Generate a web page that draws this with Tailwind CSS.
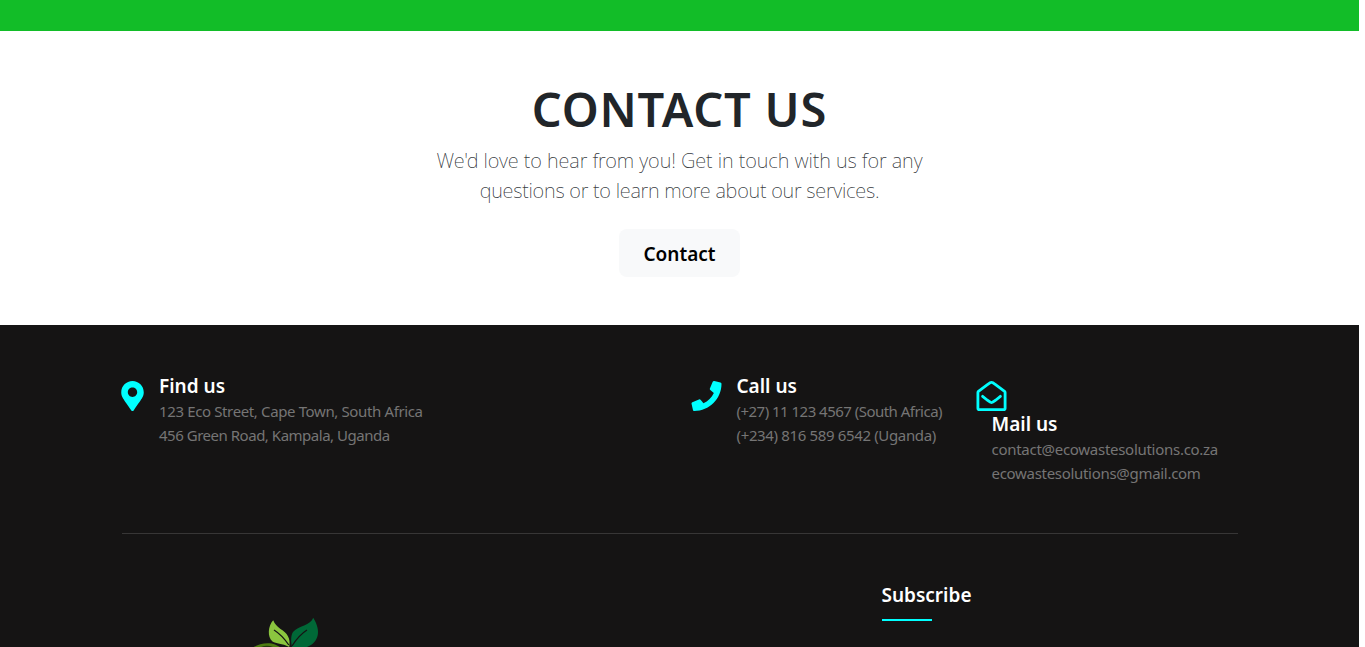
<!DOCTYPE html>
<html lang="en">
<head>
    <meta charset="UTF-8">
    <meta name="viewport" content="width=device-width, initial-scale=1.0">
    <title>Eco Waste Solutions</title>
    <script src="https://cdn.jsdelivr.net/npm/@tailwindcss/browser@4"></script>
</head>
<body class="bg-white h-screen overflow-hidden font-['Noto_Sans',sans-serif]">
    <div class="w-[1359px]">
        <div class="h-[31px] bg-[#12bd28]"></div>

        <section class="h-[294px] pt-[49px] flex flex-col items-center text-[#212529]">
            <h1 class="text-[47px] leading-[58px] font-[650] tracking-[0.8px] whitespace-nowrap">CONTACT US</h1>
            <p class="mt-[8px] text-xl leading-[30px] font-extralight text-center whitespace-nowrap text-[#212529]/90"><span class="tracking-[-0.07px]">We'd love to hear from you! Get in touch with us for any</span><br><span class="tracking-[-0.25px]">questions or to learn more about our services.</span></p>
            <a href="#" class="mt-[23px] w-[121px] h-12 pt-0.5 rounded-lg bg-[#f8f9fa] text-black text-[19px] font-semibold flex items-center justify-center">Contact</a>
        </section>

        <footer class="h-[322px] bg-[#151414]">
            <div class="w-[1116px] mx-auto">
                <div class="h-[209px] pt-12 grid grid-cols-[570px_285px_1fr] border-b border-[#373636]">
                    <div class="flex">
                        <svg class="-ml-[0.5px] mt-2 w-[23px] h-[30px] fill-[#00ffff]" viewBox="-4.25 0 392.5 512"><path d="M172.268 501.67C26.97 291.031 0 269.413 0 192 0 85.961 85.961 0 192 0s192 85.961 192 192c0 77.413-26.97 99.031-172.268 309.67-9.535 13.774-29.93 13.773-39.464 0zM192 272c44.183 0 80-35.817 80-80s-35.817-80-80-80-80 35.817-80 80 35.817 80 80 80z"/></svg>
                        <div class="pl-[15px] whitespace-nowrap">
                            <h4 class="pt-px text-[19px] leading-6 font-semibold text-white">Find us</h4>
                            <p class="mt-px text-[15px] leading-6 tracking-[-0.37px] text-[#757575]">123 Eco Street, Cape Town, South Africa</p>
                            <p class="text-[15px] leading-6 tracking-[-0.48px] text-[#757575]">456 Green Road, Kampala, Uganda</p>
                        </div>
                    </div>
                    <div class="flex">
                        <svg class="-ml-[0.5px] -mr-[0.5px] mt-2 w-[31px] h-[30px] fill-[#00ffff]" viewBox="-8.5 0 529 512"><path d="M493.4 24.6l-104-24c-11.3-2.6-22.9 3.3-27.5 13.9l-48 112c-4.2 9.8-1.4 21.3 6.9 28l60.6 49.6c-36 76.7-98.9 140.5-177.2 177.2l-49.6-60.6c-6.8-8.3-18.2-11.1-28-6.9l-112 48C3.9 366.5-2 378.1.6 389.4l24 104C27.1 504.2 36.7 512 48 512c256.1 0 464-207.5 464-464 0-11.2-7.7-20.9-18.6-23.4z"/></svg>
                        <div class="pl-[15px] whitespace-nowrap">
                            <h4 class="pt-px text-[19px] leading-6 font-semibold text-white">Call us</h4>
                            <p class="mt-px text-[15px] leading-6 tracking-[-0.52px] text-[#757575]">(+27) 11 123 4567 (South Africa)</p>
                            <p class="text-[15px] leading-6 tracking-[-0.35px] text-[#757575]">(+234) 816 589 6542 (Uganda)</p>
                        </div>
                    </div>
                    <div>
                        <svg class="-ml-[0.5px] mt-2 w-[31px] h-[30px]" viewBox="-8.5 0 529 512" fill="none" stroke="#00ffff" stroke-width="48" stroke-linejoin="round" stroke-linecap="round"><path d="M24 197c0-8 3-14 9-19 22-17 40-32 148-112 17-12 50-43 75-42 25-1 58 30 75 42 108 80 126 95 148 112 6 5 9 11 9 19v267c0 13-11 24-24 24H48c-13 0-24-11-24-24z"/><path d="M104 262l77 62c17 13 50 44 75 44s58-31 75-44l77-62"/></svg>
                        <div class="pl-[15px] whitespace-nowrap">
                            <h4 class="pt-px text-[19px] leading-6 font-semibold text-white">Mail us</h4>
                            <p class="mt-px text-[15px] leading-6 tracking-[-0.28px] text-[#757575]">contact@ecowastesolutions.co.za</p>
                            <p class="text-[15px] leading-6 tracking-[-0.3px] text-[#757575]">ecowastesolutions@gmail.com</p>
                        </div>
                    </div>
                </div>

                <div class="grid grid-cols-[760px_1fr]">
                    <div class="pl-[130px] pt-[83px]">
                        <svg class="w-[72px] h-[30px]" viewBox="0 0 72 30">
                            <path d="M2 30C7 26.5 17 25 23 27.5L28 30Z" fill="#4f7d12"/>
                            <path d="M9 30Q15 27.5 21 30Z" fill="#263a0d"/>
                            <path d="M21.2 3.3C16 9 15 20 20.5 24.5C24 27 30 26 37.2 30C39 21 35 16 28.5 12Q23 8 21.2 3.3Z" fill="#8bc53f"/>
                            <path d="M22 13Q30 18 36.8 28" fill="none" stroke="#151414" stroke-width="1.3"/>
                            <path d="M61.2 0.7C59 8 46 9 41 15C38.5 19 39 25 40 30H55C67 25 69.5 14 61.2 0.7Z" fill="#006837"/>
                            <path d="M55 13Q47 18 40 29" fill="none" stroke="#151414" stroke-width="1.3"/>
                        </svg>
                    </div>
                    <div class="pt-[49px]">
                        <h3 class="text-[19px] leading-6 font-semibold text-white">Subscribe</h3>
                        <div class="mt-3 w-[50px] h-0.5 bg-[#00ffff]"></div>
                    </div>
                </div>
            </div>
        </footer>
    </div>
</body>
</html>
